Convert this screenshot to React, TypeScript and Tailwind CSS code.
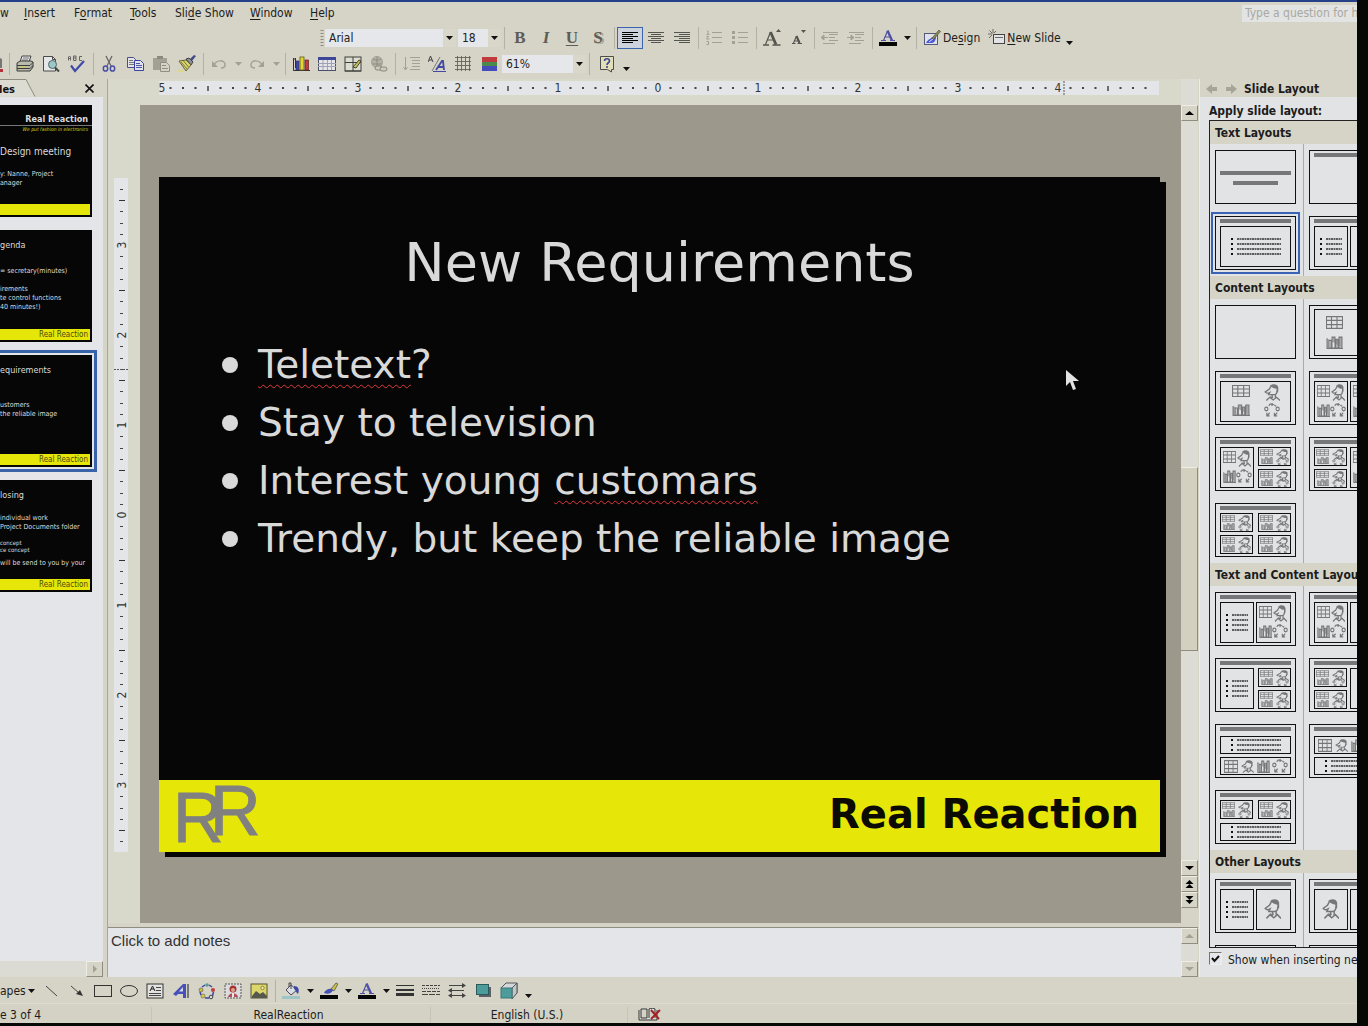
import React from "react";

const UI = "font-['DejaVu_Sans_Condensed','DejaVu_Sans',sans-serif]";

/* ---------- small building blocks ---------- */

function Glyph({ children, w = 18 }: { children: React.ReactNode; w?: number }) {
  return (
    <svg width={w} height="18" viewBox={`0 0 ${w} 18`} fill="none" aria-hidden="true" className="shrink-0">
      {children}
    </svg>
  );
}

function Tool({ label, children, on = false }: { label: string; children: React.ReactNode; on?: boolean }) {
  return (
    <button
      aria-label={label}
      className={
        on
          ? "flex h-[22px] w-[26px] shrink-0 items-center justify-center border border-[#3a64ad] bg-[#cdd2dc]"
          : "flex h-[22px] w-[26px] shrink-0 items-center justify-center"
      }
    >
      {children}
    </button>
  );
}

function Sep() {
  return (
    <div className="flex h-[22px] w-[6px] shrink-0 justify-center">
      <div className="w-px bg-[#b3b1a4]" />
    </div>
  );
}

function Drop({ label, dim = false, low = false }: { label: string; dim?: boolean; low?: boolean }) {
  return (
    <button aria-label={label} className={low ? "flex h-[22px] w-[12px] shrink-0 items-end justify-center pb-1" : "flex h-[22px] w-[12px] shrink-0 items-center justify-center"}>
      <svg width="7" height="4" viewBox="0 0 7 4" aria-hidden="true">
        <path d="M0 0h7L3.5 4z" fill={dim ? "#a3a195" : "#111"} />
      </svg>
    </button>
  );
}

function Combo({ label, value, box }: { label: string; value: string; box: string }) {
  return (
    <div className={box}>
      <select aria-label={label} className="h-[18px] min-w-0 flex-1 appearance-none bg-[#e6e7ea] pl-1 text-[12px] leading-[18px] text-[#222] outline-none">
        <option>{value}</option>
      </select>
      <div className="flex w-[13px] items-center justify-center bg-[#d8d7c9]">
        <svg width="7" height="4" viewBox="0 0 7 4" aria-hidden="true">
          <path d="M0 0h7L3.5 4z" fill="#111" />
        </svg>
      </div>
    </div>
  );
}

/* ---------- menu bar ---------- */

function MenuItem({ pre = "", hot, post, w }: { pre?: string; hot: string; post: string; w: string }) {
  return (
    <button className={`${w} shrink-0 text-left whitespace-nowrap`}>
      {pre}
      <span className="underline underline-offset-2">{hot}</span>
      {post}
    </button>
  );
}

function MenuBar() {
  return (
    <nav className="flex h-[23px] shrink-0 items-center pb-px text-[12px] leading-[16px]">
      <button className="w-6 shrink-0 text-left">w</button>
      <MenuItem hot="I" post="nsert" w="w-[50px]" />
      <MenuItem pre="F" hot="o" post="rmat" w="w-[56px]" />
      <MenuItem hot="T" post="ools" w="w-[45px]" />
      <MenuItem pre="Sli" hot="d" post="e Show" w="w-[75px]" />
      <MenuItem hot="W" post="indow" w="w-[60px]" />
      <MenuItem hot="H" post="elp" w="w-[40px]" />
      <div className="flex-1" />
      <input
        aria-label="Type a question for help"
        placeholder="Type a question for h"
        className="h-[17px] w-[115px] bg-[#e2e3e3] pl-[3px] text-[12px] outline-none placeholder:text-[#a9a99f]"
      />
    </nav>
  );
}

/* ---------- formatting toolbar ---------- */

const GREY = "#55554f";
const DIM = "#a3a195";

function Lines({ rows, color }: { rows: [number, number, number][]; color: string }) {
  return (
    <g stroke={color} strokeWidth="1">
      {rows.map(([x1, x2, y], i) => (
        <path key={i} d={`M${x1} ${y + 0.5}H${x2}`} />
      ))}
    </g>
  );
}

function FormatBar() {
  const serif = "font-['Liberation_Serif',serif] text-[17px] leading-[18px] font-bold text-[#5d5d57]";
  return (
    <div className="flex h-[26px] shrink-0 items-center pl-[319px] text-[12px]">
      <svg width="6" height="16" viewBox="0 0 6 16" aria-hidden="true" className="shrink-0">
        <path d="M3 0v16" stroke="#8f8d80" strokeWidth="3" strokeDasharray="1 2" />
      </svg>
      <Combo label="Font" value="Arial" box="flex w-[131px] shrink-0" />
      <Combo label="Font size" value="18" box="ml-[2px] flex w-[43px] shrink-0" />
      <Sep />
      <Tool label="Bold"><span className={serif}>B</span></Tool>
      <Tool label="Italic"><span className={serif + " italic"}>I</span></Tool>
      <Tool label="Underline"><span className={serif + " underline underline-offset-2"}>U</span></Tool>
      <Tool label="Shadow"><span className={serif + " [text-shadow:2px_1px_#a9a79a]"}>S</span></Tool>
      <Sep />
      <Tool label="Align left" on>
        <Glyph><Lines color="#000" rows={[[1, 17, 3], [1, 12, 5], [1, 17, 7], [1, 12, 9], [1, 17, 11], [1, 12, 13]]} /></Glyph>
      </Tool>
      <Tool label="Center">
        <Glyph><Lines color={GREY} rows={[[1, 17, 3], [4, 14, 5], [1, 17, 7], [4, 14, 9], [1, 17, 11], [4, 14, 13]]} /></Glyph>
      </Tool>
      <Tool label="Align right">
        <Glyph><Lines color={GREY} rows={[[1, 17, 3], [6, 17, 5], [1, 17, 7], [6, 17, 9], [1, 17, 11], [6, 17, 13]]} /></Glyph>
      </Tool>
      <Sep />
      <Tool label="Numbering">
        <Glyph>
          <Lines color={DIM} rows={[[7, 17, 3], [7, 17, 8], [7, 17, 13]]} />
          <path d="M2 2h1v3M1.500 5.500h3M1.500 7.500h2l-2 2.500h3M1.500 12.500h2v3h-2" stroke={DIM} />
        </Glyph>
      </Tool>
      <Tool label="Bullets">
        <Glyph>
          <Lines color={DIM} rows={[[7, 17, 3], [7, 17, 8], [7, 17, 13]]} />
          <path d="M1 2h3v3h-3zM1 7h3v3h-3zM1 12h3v3h-3z" fill={DIM} />
        </Glyph>
      </Tool>
      <Sep />
      <Tool label="Increase font size">
        <Glyph>
          <path d="M7.500 3L2.500 15.500M4.500 11h7" stroke={GREY} strokeWidth="1.200" />
          <path d="M7.500 3l5.500 12.500" stroke={GREY} strokeWidth="2.800" />
          <path d="M0 16h6M9.500 16h8" stroke={GREY} strokeWidth="1.300" />
          <path d="M13 3h5l-2.500-3z" fill={GREY} />
        </Glyph>
      </Tool>
      <Tool label="Decrease font size">
        <Glyph>
          <path d="M7.500 7L4.500 14M5.500 12h5" stroke={GREY} strokeWidth="1.100" />
          <path d="M7.500 7l3 7" stroke={GREY} strokeWidth="2.200" />
          <path d="M3 14.500h3.500M8.500 14.500h4.500" stroke={GREY} />
          <path d="M12 1h5l-2.500 3z" fill={GREY} />
        </Glyph>
      </Tool>
      <Sep />
      <Tool label="Decrease indent">
        <Glyph>
          <Lines color={DIM} rows={[[2, 17, 3], [8, 17, 5], [8, 14, 8], [8, 17, 11], [2, 14, 14]]} />
          <path d="M0 8.500h7M3 6l-3 2.500 3 2.500z" fill={DIM} stroke={DIM} />
        </Glyph>
      </Tool>
      <Tool label="Increase indent">
        <Glyph>
          <Lines color={DIM} rows={[[2, 17, 3], [8, 17, 5], [8, 14, 8], [8, 17, 11], [2, 14, 14]]} />
          <path d="M0 8.500h7M4 6l3 2.500-3 2.500z" fill={DIM} stroke={DIM} />
        </Glyph>
      </Tool>
      <Sep />
      <Tool label="Font color"><FontColor /></Tool>
      <Drop label="Font color menu" />
      <Sep />
      <button className="ml-1 flex h-[22px] shrink-0 items-center gap-[2px]">
        <Glyph>
          <rect x="1.500" y="4.500" width="13" height="11" fill="#dfe1ec" stroke="#555a78" />
          <path d="M3 14c2-4 5-4 6-6l4 0c0 3-2 6-4 6z" fill="#4a58d6" />
          <path d="M6 13l5-4" stroke="#dfe1ec" />
          <path d="M9 9l7-8 1.500 1.500-7 8z" fill="#8a8a55" stroke="#55553c" strokeWidth=".7" />
        </Glyph>
        <span>De<span className="underline underline-offset-2">s</span>ign</span>
      </button>
      <button className="ml-2 flex h-[22px] shrink-0 items-center gap-[1px]">
        <Glyph>
          <rect x="5.500" y="5.500" width="11" height="9" fill="#e2e3e6" stroke="#444" />
          <path d="M7 8.500h8M5 0v4M0 5h4M1.500 1.500l3 3M8 2l-2 2M1 9l3-3" stroke="#6b6b66" />
        </Glyph>
        <span><span className="underline underline-offset-2">N</span>ew Slide</span>
      </button>
      <div className="ml-[3px]"><Drop label="Toolbar options" low /></div>
    </div>
  );
}

function FontColor() {
  return (
    <Glyph>
      <path d="M8.500 2L4.500 11.500M6 8h6" stroke="#5052a4" strokeWidth="1.200" />
      <path d="M8.500 1.500l4.500 10" stroke="#5052a4" strokeWidth="2.400" />
      <path d="M2 11.500h5M11 11.500h5" stroke="#5052a4" />
      <rect x="0" y="13" width="18" height="4" fill="#050505" />
    </Glyph>
  );
}

/* ---------- standard toolbar ---------- */

function StandardBar() {
  return (
    <div className="flex h-[26px] shrink-0 items-center text-[12px]">
      <svg width="6" height="18" viewBox="0 0 6 18" aria-hidden="true" className="shrink-0">
        <path d="M0 3l2 1v9H0z" fill="#777" />
        <path d="M0 14h3v3H0z" fill="#b2323a" />
      </svg>
      <Sep />
      <Tool label="Print">
        <Glyph>
          <path d="M6 1h9l-2 6H4z" fill="#e5e6e8" stroke="#444" />
          <path d="M7 3h6M6 5h6" stroke="#777" />
          <path d="M1 8l3-2h11l2 1v5l-3 4H1z" fill="#b9b9ae" stroke="#3a3a38" />
          <path d="M1 10.500h13l3-3M1 13.500h13l3-3" stroke="#3a3a38" />
          <path d="M4 12h5" stroke="#d8d04a" />
        </Glyph>
      </Tool>
      <Tool label="Print preview">
        <Glyph>
          <path d="M1.500 1.500h9l3 3v11.500h-12z" fill="#e6e7e9" stroke="#4a4a48" />
          <path d="M10.500 1.500v3h3" stroke="#4a4a48" />
          <circle cx="10.500" cy="9.500" r="4" fill="#9fc6c7" stroke="#4c6669" />
          <path d="M13 12.500l4 4" stroke="#444" strokeWidth="2" />
        </Glyph>
      </Tool>
      <Tool label="Spelling">
        <Glyph>
          <path d="M.5 5.500V2l1-1 1 1v3.500M.5 3.500h2M5.500 1v4.500h2.500V1zM5.500 3h2.500M14 1.500h-2.500v4H14" stroke="#666" />
          <path d="M3 10.500l4 5.500L16 6" stroke="#4149a8" strokeWidth="2.200" />
        </Glyph>
      </Tool>
      <Sep />
      <Tool label="Cut">
        <Glyph>
          <path d="M6 1l5 10M12 1l-5 10" stroke="#666" strokeWidth="1.300" />
          <ellipse cx="5.500" cy="13.500" rx="2.200" ry="2.600" stroke="#474fa6" strokeWidth="1.500" />
          <ellipse cx="12.500" cy="13.500" rx="2.200" ry="2.600" stroke="#474fa6" strokeWidth="1.500" />
        </Glyph>
      </Tool>
      <Tool label="Copy">
        <Glyph>
          <path d="M1.500 2.500h6l2 2v8h-8z" fill="#e3e4ea" stroke="#4b4e86" />
          <path d="M3 5.500h4M3 7.500h5M3 9.500h5" stroke="#777" />
          <path d="M8.500 5.500h6l3 3v7h-9z" fill="#e3e4ea" stroke="#3a42a2" />
          <path d="M10 8.500h4M10 10.500h6M10 12.500h6" stroke="#4c55a8" />
        </Glyph>
      </Tool>
      <Tool label="Paste">
        <Glyph>
          <path d="M1 3h14v12H1z" fill="#a3a196" />
          <path d="M5 1h6v3H5z" fill="#8c8a7f" />
          <path d="M8.500 7.500h6l3 3v6h-9z" fill="#d3d2c5" stroke="#908e83" />
          <path d="M10 10.500h4M10 13.500h6" stroke="#908e83" />
        </Glyph>
      </Tool>
      <Tool label="Format painter">
        <Glyph>
          <path d="M12 4l4-4 2 1-4 5z" fill="#434a8c" />
          <path d="M8 4l3-1 4 4-2 3z" fill="#8c8f9a" stroke="#444" />
          <path d="M1 6l7-1 5 5-5 6z" fill="#d9d568" stroke="#64623c" />
          <path d="M3 7l6 7M5.500 6l5 6" stroke="#77754a" />
          <path d="M0 16h6" stroke="#e4dc4a" />
        </Glyph>
      </Tool>
      <Sep />
      <Tool label="Undo">
        <Glyph>
          <path d="M4 10c2-5 11-6 11 0 0 2-2 3-4 3" stroke={DIM} strokeWidth="1.500" />
          <path d="M2 6v6h6z" fill={DIM} />
        </Glyph>
      </Tool>
      <Drop label="Undo menu" dim />
      <Tool label="Redo">
        <Glyph>
          <path d="M14 10c-2-5-11-6-11 0 0 2 2 3 4 3" stroke={DIM} strokeWidth="1.500" />
          <path d="M16 6v6h-6z" fill={DIM} />
        </Glyph>
      </Tool>
      <Drop label="Redo menu" dim />
      <Sep />
      <Tool label="Insert chart">
        <Glyph>
          <path d="M1.500 3v12.500H18M1.500 15.500V5l2-2v10" stroke="#333" />
          <rect x="4" y="6" width="3" height="9" fill="#444cb0" stroke="#2b2f66" strokeWidth=".7" />
          <rect x="8" y="2" width="4" height="13" fill="#e3d631" stroke="#5d581c" strokeWidth=".8" />
          <rect x="13" y="5" width="3.500" height="10" fill="#c23a3c" stroke="#5e2022" strokeWidth=".7" />
        </Glyph>
      </Tool>
      <Tool label="Insert table">
        <Glyph>
          <rect x=".5" y="2.500" width="17" height="13" fill="#e5e6ea" stroke="#4b4e66" />
          <rect x="0" y="2" width="18" height="3" fill="#3e4699" />
          <path d="M0 8.500h18M0 11.500h18M5 5v10M9.500 5v10M13.500 5v10" stroke="#a0a2b4" />
        </Glyph>
      </Tool>
      <Tool label="Tables and borders">
        <Glyph>
          <rect x="1" y="2" width="16" height="14" fill="#dddcd2" stroke="#3f3f3b" />
          <path d="M1 7.500h16M9 2v14M1 16h16" stroke="#3f3f3b" />
          <path d="M9 12l6-7 2 1-5 7z" fill="#c9c15a" stroke="#45432a" />
        </Glyph>
      </Tool>
      <Tool label="Insert hyperlink">
        <Glyph>
          <circle cx="7" cy="7" r="5.500" fill="#b5b3a8" stroke={DIM} />
          <path d="M3 4c3 2 6 1 8 0M2 9h10M7 2v10" stroke="#8f8d82" />
          <rect x="5" y="11" width="7" height="4" rx="2" stroke="#8b897e" fill="#cbcabd" />
          <rect x="10" y="12" width="7" height="4" rx="2" stroke="#8b897e" fill="#cbcabd" />
        </Glyph>
      </Tool>
      <Sep />
      <Tool label="Expand all">
        <Glyph>
          <path d="M3.500 2v12M1.500 12l2 3 2-3" stroke={DIM} />
          <Lines color={DIM} rows={[[8, 18, 2], [10, 18, 5], [10, 18, 8], [10, 18, 11], [8, 18, 14]]} />
        </Glyph>
      </Tool>
      <Tool label="Show formatting">
        <Glyph>
          <path d="M0 7l2.500-6 2.500 6M1 5h3" stroke="#444" />
          <path d="M4 16L12 2" stroke="#777" />
          <path d="M8 15l6-9h1l1 9M10 12h5" stroke="#4249a2" strokeWidth="1.800" />
          <path d="M5 16.500h13" stroke="#4249a2" />
        </Glyph>
      </Tool>
      <Tool label="Show grid">
        <Glyph>
          <path d="M1 2.500h16M1 6.500h16M1 10.500h16M1 14.500h16M3.500 1v15M7.500 1v15M11.500 1v15M15.500 1v15" stroke="#63635e" strokeWidth=".9" />
        </Glyph>
      </Tool>
      <Tool label="Color or grayscale">
        <Glyph>
          <rect x="2" y="2" width="15" height="5" fill="#bf3b3e" />
          <rect x="2" y="7" width="15" height="4" fill="#4b8a4e" />
          <rect x="2" y="11" width="15" height="5" fill="#464cba" />
        </Glyph>
      </Tool>
      <Combo label="Zoom" value="61%" box="flex w-[84px] shrink-0" />
      <Sep />
      <div className="ml-[2px]">
        <Tool label="Help">
          <Glyph>
            <path d="M2.500 1.500h13v13h-2v2.500l-4-2.500h-7z" fill="#e2e0b8" stroke="#4d4d49" />
            <path d="M6.500 6c0-3 5-3 5 0 0 2-2.500 1.500-2.500 4M9 11v2" stroke="#3d4493" strokeWidth="1.600" />
          </Glyph>
        </Tool>
      </div>
      <Drop label="More buttons" low />
    </div>
  );
}

/* ---------- left thumbnails ---------- */

function Mini({ children, footer = true }: { children: React.ReactNode; footer?: boolean }) {
  return (
    <div className="flex h-[112px] w-[92px] flex-col overflow-hidden bg-[#060606] text-[7px] leading-[9px] whitespace-nowrap text-[#dcdcdc]">
      <div className="min-h-0 flex-1">{children}</div>
      <div className="mr-[2px] mb-[2px] h-[11px] bg-[#e6e708] pr-[2px] text-right text-[8px] leading-[11px] text-[#4a4a08]">
        {footer ? "Real Reaction" : ""}
      </div>
    </div>
  );
}

function LeftPane() {
  return (
    <aside className="flex w-[103px] shrink-0 flex-col overflow-hidden bg-[#e4e5e8]">
      <div className="flex h-[18px] shrink-0 items-center justify-between bg-[#d6d4c7] pr-2">
        <svg width="36" height="18" viewBox="0 0 36 18" className="shrink-0">
          <path d="M0 .5h26l9 17H0z" fill="#dddcd2" />
          <path d="M0 .5h26l9 17" fill="none" stroke="#8f8d80" />
          <text x="-1" y="14" fontSize="11" fontWeight="bold" fontFamily="'DejaVu Sans Condensed','DejaVu Sans',sans-serif" fill="#111">les</text>
        </svg>
        <button aria-label="Close" className="flex h-4 w-3 items-center justify-center">
          <svg width="9" height="9" viewBox="0 0 9 9" aria-hidden="true"><path d="M.5.5l8 8M8.500.5l-8 8" stroke="#111" strokeWidth="1.600" /></svg>
        </button>
      </div>
      <div className="flex flex-1 flex-col pt-[8px]">
        <Mini footer={false}>
          <div className="mt-[9px] border-b border-[#77777a] pr-1 text-right text-[9px] leading-[11px] font-bold">Real Reaction</div>
          <div className="pr-1 text-right text-[5px] leading-[6px] italic text-[#d8d81c]">We put fashion in electronics</div>
          <div className="mt-[14px] text-[10px] leading-[12px]">Design meeting</div>
          <div className="mt-[12px]">y: Nanne, Project</div>
          <div>anager</div>
        </Mini>
        <div className="h-[13px]" />
        <Mini>
          <div className="pt-[9px] text-[9px] leading-[12px]">genda</div>
          <div className="mt-[16px]">= secretary(minutes)</div>
          <div className="mt-[9px]">irements</div>
          <div>te control functions</div>
          <div>40 minutes!)</div>
        </Mini>
        <div className="mt-[8px] mb-[8px] w-[97px] border-y-[3px] border-r-[3px] border-[#3963a8] py-[2px]">
          <Mini>
            <div className="pt-[9px] text-[9px] leading-[12px]">equirements</div>
            <div className="mt-[25px]">ustomers</div>
            <div>the reliable image</div>
          </Mini>
        </div>
        <Mini>
          <div className="pt-[9px] text-[9px] leading-[12px]">losing</div>
          <div className="mt-[13px]">individual work</div>
          <div>Project Documents folder</div>
          <div className="mt-[7px] text-[6px] leading-[7px]">concept</div>
          <div className="text-[6px] leading-[7px]">ce concept</div>
          <div className="mt-[6px]">will be send to you by your</div>
        </Mini>
      </div>
      <div className="flex h-[16px] shrink-0 justify-end bg-[#dcdbd3]">
        <ScrollBtn d="M3 0v8l4-4z" label="Scroll right" dim />
      </div>
    </aside>
  );
}

function ScrollBtn({ d, label, dim = false }: { d: string; label: string; dim?: boolean }) {
  return (
    <button aria-label={label} className="flex h-[16px] w-[17px] shrink-0 items-center justify-center border-t border-r border-b border-l border-t-[#efeee6] border-r-[#8f8d80] border-b-[#8f8d80] border-l-[#efeee6] bg-[#d6d4c7]">
      <svg width="9" height="8" viewBox="0 0 9 8" aria-hidden="true"><path d={d} fill={dim ? DIM : "#000"} /></svg>
    </button>
  );
}

const UP = "M0 6h9L4.500 2z";
const DOWN = "M0 2h9L4.500 6z";

/* ---------- rulers ---------- */

const MARKS = Array.from({ length: 81 }, (_, i) => i - 40);

function RulerTop() {
  return (
    <svg width="1000" height="14" viewBox="0 0 1000 14" className="shrink-0 bg-[#e4e5e8]">
      {MARKS.map((m) => {
        const x = 499 + m * 12.5;
        if (m % 8 === 0)
          return m === 40 ? null : (
            <text key={m} x={Math.max(x, 3)} y="11" textAnchor="middle" fontSize="12" fontFamily="'DejaVu Sans Condensed','DejaVu Sans',sans-serif" fill="#333">{Math.abs(m / 8)}</text>
          );
        return m % 4 === 0 ? (
          <path key={m} d={`M${x} 5v5`} stroke="#444" strokeWidth="1.500" />
        ) : (
          <rect key={m} x={x - 1} y="6" width="2" height="2" fill="#444" />
        );
      })}
      <path d="M905 0v14" stroke="#555" strokeDasharray="2 1" />
    </svg>
  );
}

function RulerSide() {
  return (
    <svg width="14" height="674" viewBox="0 0 14 674" className="shrink-0 bg-[#e4e5e8]">
      {MARKS.filter((m) => Math.abs(m) < 30).map((m) => {
        const y = 337 + m * 11.25;
        if (m % 8 === 0)
          return (
            <text key={m} transform={`translate(12 ${y}) rotate(-90)`} textAnchor="middle" fontSize="12" fontFamily="'DejaVu Sans Condensed','DejaVu Sans',sans-serif" fill="#333">{Math.abs(m / 8)}</text>
          );
        return m % 4 === 0 ? (
          <path key={m} d={`M5 ${Math.round(y) + 0.5}h6`} stroke="#333" />
        ) : (
          <path key={m} d={`M6 ${Math.round(y) + 0.5}h3`} stroke="#444" />
        );
      })}
      <path d="M0 191.500h14" stroke="#555" strokeDasharray="2 1" />
    </svg>
  );
}

/* ---------- slide ---------- */

function Bullet({ children }: { children: React.ReactNode }) {
  return (
    <li className="flex items-center leading-[58px] whitespace-nowrap">
      <span className="mr-[20px] size-[16px] rounded-full bg-[#d9d9d9]" />
      <span>{children}</span>
    </li>
  );
}

const SPELL = "underline decoration-[#e0383c] decoration-wavy decoration-1 underline-offset-[6px]";

function Slide() {
  return (
    <div className="relative flex flex-1 flex-col bg-[#060606] font-['DejaVu_Sans',sans-serif] text-[#d9d9d9] shadow-[6px_5px_0_#060606]">
      <h1 className="mt-[54px] text-center text-[54px] leading-[64px]">New Requirements</h1>
      <ul className="mt-[41px] flex-1 pl-[63px] text-[39px]">
        <Bullet><span className={SPELL}>Teletext</span>?</Bullet>
        <Bullet>Stay to television</Bullet>
        <Bullet>Interest young <span className={SPELL}>customars</span></Bullet>
        <Bullet>Trendy, but keep the reliable image</Bullet>
      </ul>
      <div className="flex h-[72px] items-center justify-between bg-[#e6e708] pr-[21px] pb-1 pl-[14px]">
        <svg width="94" height="68" viewBox="0 0 94 68" fill="#808080" stroke="#808080" strokeWidth="1" fontFamily="'Liberation Sans',Arial,sans-serif" fontSize="70">
          <text x="0" y="62">R</text>
          <text x="37" y="55">R</text>
        </svg>
        <span className="text-[40px] leading-[48px] font-bold text-[#0b0b04]">Real Reaction</span>
      </div>
      <svg width="14" height="22" viewBox="0 0 14 22" className="absolute top-[193px] left-[907px]" aria-hidden="true">
        <path d="M0 0v16l4-4 3 8 3-1-3-8h6z" fill="#e2e2e2" />
      </svg>
    </div>
  );
}

function Workspace() {
  return (
    <main className="flex min-w-0 flex-1 flex-col border-l border-[#a9a79a]">
      <div className="flex min-h-0 flex-1">
        <div className="flex min-w-0 flex-1 flex-col">
          <div className="flex h-[26px] shrink-0 items-center overflow-hidden bg-[#d9d9cb] pb-[8px] pl-[51px]">
            <RulerTop />
          </div>
          <div className="flex min-h-0 flex-1">
            <div className="flex w-[32px] shrink-0 justify-center bg-[#d9d9cb] pt-[73px] pr-[6px]">
              <RulerSide />
            </div>
            <div className="flex min-w-0 flex-1 bg-[#9c988b] pt-[72px] pr-[21px] pb-[71px] pl-[19px]">
              <Slide />
            </div>
          </div>
        </div>
        <div className="flex w-[17px] shrink-0 flex-col bg-[#dddcd4] pt-[26px]">
          <ScrollBtn d={UP} label="Scroll up" />
          <div className="flex min-h-0 flex-1 flex-col">
            <div className="grow-[348]" />
            <div className="grow-[183] border-t border-r border-b border-t-[#efeee6] border-r-[#8f8d80] border-b-[#8f8d80] bg-[#d3d0bf]" />
            <div className="grow-[210]" />
          </div>
          <ScrollBtn d={DOWN} label="Scroll down" />
          <ScrollBtn d="M0.500 4h8l-4-4zM.5 8h8l-4-4z" label="Previous slide" />
          <ScrollBtn d="M0.500 0h8l-4 4zM.5 4h8l-4 4z" label="Next slide" />
          <div className="h-[15px] bg-[#d6d4c7]" />
        </div>
      </div>
      <div className="h-[5px] shrink-0 border-b border-[#8f8d80] bg-[#d6d4c7]" />
      <div className="flex h-[49px] shrink-0">
        <textarea
          aria-label="Notes"
          defaultValue="Click to add notes"
          className="min-w-0 flex-1 resize-none bg-[#e4e5e8] px-[3px] py-1 font-['Liberation_Sans',Arial,sans-serif] text-[15px] leading-[18px] text-[#333] outline-none"
        />
        <div className="flex w-[17px] flex-col justify-between bg-[#dddcd4]">
          <ScrollBtn d={UP} label="Scroll notes up" dim />
          <ScrollBtn d={DOWN} label="Scroll notes down" dim />
        </div>
      </div>
    </main>
  );
}

/* ---------- layout thumbnails ---------- */

type Box = { x: number; y: number; w: number; h: number };
const INK = "#77777a";

function Frame({ x, y, w, h }: Box) {
  return <rect x={x + 0.5} y={y + 0.5} width={w - 1} height={h - 1} fill="none" stroke="#111" />;
}
function TableIcon({ x, y, w, h }: Box) {
  return (
    <svg x={x} y={y} width={w} height={h} viewBox="0 0 17 12" preserveAspectRatio="none">
      <path d="M.5.5h16v11H.5zM.5 4h16M.5 8h16M5.500 1v10M11 1v10" fill="none" stroke={INK} strokeWidth="1.100" />
    </svg>
  );
}
function ChartIcon({ x, y, w, h }: Box) {
  return (
    <svg x={x} y={y} width={w} height={h} viewBox="0 0 17 12" preserveAspectRatio="none">
      <path d="M1 2v9.500h16M3 4h2v7H3zM6 1h3v10H6zM10 3h2v8h-2zM13 1h3v10h-3z" fill="#a6a6a8" stroke={INK} />
    </svg>
  );
}
function PersonIcon({ x, y, w, h }: Box) {
  return (
    <svg x={x} y={y} width={w} height={h} viewBox="0 0 14 16" preserveAspectRatio="none">
      <path d="M6 2.500L4.500 5 1 7.500c1 1.500 3 1 4 .5L4 10h4.500c2 0 3-2 3-4M7 10.500l.5 2.500M10 9.500v3.500M7.500 13l-2.500-1M2 15.500l3-3 3 2.500 3-2.500 3 3" fill="none" stroke={INK} strokeWidth="1.200" />
      <path d="M5 2c1.500-2.500 7-2.500 7.500 1v4l-1.500 1V4.500C9 4.500 7 3 5 2z" fill={INK} />
    </svg>
  );
}
function CycleIcon({ x, y, w, h }: Box) {
  return (
    <svg x={x} y={y} width={w} height={h} viewBox="0 0 17 13" preserveAspectRatio="none">
      <g fill="none" stroke={INK} strokeWidth="1.200">
        <circle cx="2.500" cy="5.500" r="1.700" /><circle cx="14.500" cy="5.500" r="1.700" />
        <path d="M5 2.500l1.500-1.500h3M11 2l2 1M3 9v3h3M3 12l3-3M14 9l-3 3M11 9v3h3" />
      </g>
      <path d="M8 0l3 1.500-3 1.500z" fill={INK} />
    </svg>
  );
}
function Quad(b: Box) {
  const { x, y, w, h } = b;
  const big = h > 25;
  const wide = w > 50;
  if (wide)
    return (
      <>
        <Frame {...b} />
        <TableIcon x={x + 12} y={y + 4} w={18} h={12} /><PersonIcon x={x + 44} y={y + 3} w={16} h={17} />
        <ChartIcon x={x + 12} y={y + 23} w={18} h={12} /><CycleIcon x={x + 44} y={y + 22} w={16} h={14} />
      </>
    );
  if (big)
    return (
      <>
        <Frame {...b} />
        <TableIcon x={x + 3} y={y + 4} w={13} h={12} /><PersonIcon x={x + 17} y={y + 3} w={14} h={17} />
        <ChartIcon x={x + 3} y={y + 23} w={13} h={13} /><CycleIcon x={x + 16} y={y + 22} w={16} h={14} />
      </>
    );
  return (
    <>
      <Frame {...b} />
      <TableIcon x={x + 2} y={y + 2} w={13} h={7} /><PersonIcon x={x + 18} y={y + 2} w={13} h={11} />
      <ChartIcon x={x + 3} y={y + 10} w={12} h={7} /><CycleIcon x={x + 18} y={y + 11} w={13} h={7} />
    </>
  );
}
function Words({ x, y, w, h, n = 4, len }: Box & { n?: number; len: number }) {
  const x0 = x + Math.round((w - len - 6) / 2);
  const y0 = y + Math.round((h - (n - 1) * 5) / 2);
  return (
    <>
      <Frame x={x} y={y} w={w} h={h} />
      {Array.from({ length: n }, (_, i) => (
        <g key={i}>
          <rect x={x0} y={y0 + i * 5 - 1} width="2" height="2" fill="#111" />
          <path d={`M${x0 + 6} ${y0 + i * 5}h${len}`} stroke="#333" strokeWidth="1.500" strokeDasharray="2 .5" />
        </g>
      ))}
    </>
  );
}
function Strip(b: Box) {
  return (
    <>
      <Frame {...b} />
      <TableIcon x={b.x + 4} y={b.y + 3} w={14} h={13} /><PersonIcon x={b.x + 21} y={b.y + 3} w={13} h={13} />
      <ChartIcon x={b.x + 37} y={b.y + 3} w={13} h={13} /><CycleIcon x={b.x + 52} y={b.y + 2} w={16} h={14} />
    </>
  );
}

const L = { x: 5, y: 10, w: 34, h: 41 };
const R = { x: 41, y: 10, w: 35, h: 41 };
const FULL = { x: 5, y: 10, w: 71, h: 41 };
const LT = { x: 5, y: 10, w: 33, h: 19 };
const LB = { x: 5, y: 32, w: 33, h: 19 };
const RT = { x: 43, y: 10, w: 33, h: 19 };
const RB = { x: 43, y: 32, w: 33, h: 19 };
const TOP = { x: 5, y: 12, w: 71, h: 18 };
const BOT = { x: 5, y: 33, w: 71, h: 18 };
const Title = () => <rect x="5" y="3" width="71" height="4" fill={INK} />;
const Solo = ({ b }: { b: Box }) => (<><Frame {...b} /><PersonIcon x={b.x + 8} y={b.y + 10} w={17} h={20} /></>);

type Cell = { name: string; art: React.ReactNode; on?: boolean } | null;
const GROUPS: { title: string; cells: Cell[] }[] = [
  {
    title: "Text Layouts",
    cells: [
      { name: "Title Slide", art: <><rect x="5" y="21" width="71" height="4" fill={INK} /><rect x="18" y="31" width="45" height="4" fill={INK} /></> },
      { name: "Title Only", art: <Title /> },
      { name: "Title and Text", on: true, art: <><Title /><Words {...FULL} len={44} /></> },
      { name: "Title and 2-Column Text", art: <><Title /><Words {...L} len={16} /><Words {...R} len={16} /></> },
    ],
  },
  {
    title: "Content Layouts",
    cells: [
      { name: "Blank", art: null },
      { name: "Content", art: <><Frame x={5} y={4} w={71} h={47} /><TableIcon x={17} y={11} w={17} h={13} /><ChartIcon x={17} y={31} w={17} h={13} /></> },
      { name: "Title and Content", art: <><Title /><Quad {...FULL} /></> },
      { name: "Title and 2 Content", art: <><Title /><Quad {...L} /><Quad {...R} /></> },
      { name: "Title, Content and 2 Content", art: <><Title /><Quad {...L} /><Quad {...RT} /><Quad {...RB} /></> },
      { name: "Title, 2 Content and Content", art: <><Title /><Quad {...LT} /><Quad {...LB} /><Quad {...R} /></> },
      { name: "Title and 4 Content", art: <><Title /><Quad {...LT} /><Quad {...LB} /><Quad {...RT} /><Quad {...RB} /></> },
      null,
    ],
  },
  {
    title: "Text and Content Layou",
    cells: [
      { name: "Title, Text and Content", art: <><Title /><Words {...L} len={16} /><Quad {...R} /></> },
      { name: "Title, Content and Text", art: <><Title /><Quad {...L} /><Words {...R} len={16} /></> },
      { name: "Title, Text and 2 Content", art: <><Title /><Words {...L} len={16} /><Quad {...RT} /><Quad {...RB} /></> },
      { name: "Title, 2 Content and Text", art: <><Title /><Quad {...LT} /><Quad {...LB} /><Words {...R} len={16} /></> },
      { name: "Title and Text over Content", art: <><Title /><Words {...TOP} n={3} len={44} /><Strip {...BOT} /></> },
      { name: "Title and Content over Text", art: <><Title /><Strip {...TOP} /><Words {...BOT} n={3} len={44} /></> },
      { name: "Title and 2 Content over Text", art: <><Title /><Quad {...LT} /><Quad {...RT} /><Words {...BOT} n={3} len={44} /></> },
      null,
    ],
  },
  {
    title: "Other Layouts",
    cells: [
      { name: "Title, Text and Clip Art", art: <><Title /><Words {...L} len={16} /><Solo b={R} /></> },
      { name: "Title, Clip Art and Text", art: <><Title /><Solo b={L} /><Words {...R} len={16} /></> },
      { name: "Title, Text and Chart", art: <Title /> },
      { name: "Title, Chart and Text", art: <Title /> },
    ],
  },
];

function LayoutCell({ cell }: { cell: Cell }) {
  return (
    <div className="flex h-[66px] items-center justify-start border-r border-[#aaaaad] pl-[1px]">
      {cell && (
        <button aria-label={cell.name} className={cell.on ? "border-2 border-[#3963b4] p-[2px]" : "border-2 border-transparent p-[2px]"}>
          <svg width="81" height="54" viewBox="0 0 81 54" className="block" aria-hidden="true">
            <Frame x={0} y={0} w={81} h={54} />
            {cell.art}
          </svg>
        </button>
      )}
    </div>
  );
}

function Arrow({ d }: { d: string }) {
  return <svg width="12" height="12" viewBox="0 0 12 12" aria-hidden="true"><path d={d} fill="#a7a598" /></svg>;
}

function TaskPane() {
  return (
    <aside className="flex w-[157px] shrink-0 flex-col overflow-hidden bg-[#e2e3e4] text-[12px] leading-[16px] whitespace-nowrap">
      <div className="flex h-[18px] shrink-0 items-center bg-[#d6d4c7] pt-px pl-[6px]">
        <button aria-label="Back" className="w-[20px]"><Arrow d="M0 6l6-5v3h5v4H6v3z" /></button>
        <button aria-label="Forward" className="w-[18px]"><Arrow d="M11 6L5 1v3H0v4h5v3z" /></button>
        <h2 className="font-bold">Slide Layout</h2>
      </div>
      <div className="pt-[6px] pb-px pl-[9px] font-bold">Apply slide layout:</div>
      <div className="ml-[9px] min-h-0 flex-1 overflow-hidden border-y border-l border-[#222]">
        {GROUPS.map((g) => (
          <section key={g.title}>
            <h3 className="h-[23px] bg-[#d6d4c7] pt-px pl-[5px] leading-[22px] font-bold">{g.title}</h3>
            <div className="grid w-[188px] grid-cols-2">
              {g.cells.map((c, i) => <LayoutCell key={i} cell={c} />)}
            </div>
          </section>
        ))}
      </div>
      <label className="flex h-[29px] shrink-0 items-start gap-[6px] pt-1 pl-[9px]">
        <span className="grid shrink-0">
          <input type="checkbox" defaultChecked className="peer col-start-1 row-start-1 size-[13px] appearance-none border border-t-[#77756a] border-r-[#eee] border-b-[#eee] border-l-[#77756a] bg-[#e6e7ea]" />
          <svg width="13" height="13" viewBox="0 0 13 13" aria-hidden="true" className="pointer-events-none col-start-1 row-start-1 hidden peer-checked:block">
            <path d="M3 6l2.500 3L10 4" fill="none" stroke="#111" strokeWidth="2" />
          </svg>
        </span>
        <span>Show when inserting new</span>
      </label>
    </aside>
  );
}

/* ---------- drawing toolbar ---------- */

function DrawBar() {
  return (
    <div className="flex h-[26px] shrink-0 items-center bg-[#d6d4c7] pt-[2px] text-[12px]">
      <button className="flex w-[38px] shrink-0 items-center gap-[2px]">
        <span>apes</span>
        <svg width="7" height="4" viewBox="0 0 7 4" aria-hidden="true"><path d="M0 0h7L3.500 4z" fill="#111" /></svg>
      </button>
      <Tool label="Line"><Glyph><path d="M4 4l11 10" stroke="#444" /></Glyph></Tool>
      <Tool label="Arrow"><Glyph><path d="M3 4l8 7" stroke="#444" /><path d="M15 14l-7-2 4-4z" fill="#333" /></Glyph></Tool>
      <Tool label="Rectangle"><Glyph><rect x=".5" y="3.500" width="17" height="11" stroke="#333" /></Glyph></Tool>
      <Tool label="Oval"><Glyph><ellipse cx="9" cy="9" rx="8.500" ry="5.500" stroke="#333" /></Glyph></Tool>
      <Tool label="Text box">
        <Glyph>
          <rect x="1" y="2" width="16" height="14" fill="#e3e3e1" stroke="#333" />
          <path d="M4 9l2.500-5L9 9M5 7h3" stroke="#222" />
          <path d="M10 5.500h5M10 8.500h5M3 11.500h12M3 13.500h12" stroke="#444" />
        </Glyph>
      </Tool>
      <Tool label="WordArt">
        <Glyph>
          <path d="M1 12L11 2h3v14h-3v-4H6l-2 2z" fill="#4650bb" />
          <path d="M7 9.500h4V5z" fill="#d7d8e0" />
          <path d="M16 2v14" stroke="#777" strokeWidth="2" />
        </Glyph>
      </Tool>
      <Tool label="Diagram">
        <Glyph>
          <path d="M4 5l3-2M11 3l3 2M15.500 10l-1 4M11 16H7M3 13l-1-3" stroke="#3b45a5" strokeWidth="1.500" />
          <circle cx="9" cy="3" r="1.800" fill="#5a9a92" />
          <circle cx="15" cy="8" r="2" fill="#bd3e41" />
          <circle cx="3" cy="8" r="2" fill="#c9c13a" stroke="#555" strokeWidth=".6" />
          <circle cx="5" cy="14" r="2" fill="#d9cf37" stroke="#555" strokeWidth=".6" />
          <circle cx="13" cy="15" r="1.800" fill="#d8d8d8" stroke="#444" />
        </Glyph>
      </Tool>
      <Tool label="Clip art">
        <Glyph>
          <rect x="1" y="2" width="16" height="14" fill="#dcdcdf" stroke="#555" strokeDasharray="2 1" />
          <circle cx="9" cy="7" r="3.500" fill="#a5342f" />
          <circle cx="9" cy="8" r="2" fill="#dba48d" />
          <path d="M4 15c1-5 9-5 10 0z" fill="#b44b55" />
          <path d="M9 11v4" stroke="#e8e8e8" strokeWidth="2" />
        </Glyph>
      </Tool>
      <Tool label="Picture">
        <Glyph>
          <rect x="1" y="2" width="16" height="14" fill="#ddd66a" stroke="#55552f" />
          <circle cx="12.500" cy="6" r="1.700" fill="#f1ecab" stroke="#66642f" strokeWidth=".7" />
          <path d="M2 14l4-5 4 3 3-2 4 4v2H2z" fill="#55584a" />
        </Glyph>
      </Tool>
      <Sep />
      <Tool label="Fill color">
        <Glyph>
          <path d="M4 8l5-5 6 5-6 5z" fill="#dcdde2" stroke="#454a6a" />
          <path d="M9 7V1h-2v4" stroke="#444" />
          <path d="M12 4c4 0 6 3 4 8-2-1-2-4-4-5z" fill="#3f48a5" />
          <rect y="14" width="18" height="3" fill="#9cc5c8" />
        </Glyph>
      </Tool>
      <Drop label="Fill color menu" />
      <Tool label="Line color">
        <Glyph>
          <path d="M11 7l5-6 2 1-4 7z" fill="#c9bf49" stroke="#444" strokeWidth=".7" />
          <path d="M4 11c1-3 5-5 8-4l1 1c-1 3-5 5-9 3z" fill="#4851b4" />
          <rect y="13" width="18" height="4" fill="#050505" />
        </Glyph>
      </Tool>
      <Drop label="Line color menu" />
      <Tool label="Text color"><FontColor /></Tool>
      <Drop label="Text color menu" />
      <Tool label="Line style">
        <Glyph><path d="M0 3.500h18" stroke="#333" /><path d="M0 8h18" stroke="#333" strokeWidth="2" /><path d="M0 12.500h18" stroke="#333" strokeWidth="3" /></Glyph>
      </Tool>
      <Tool label="Dash style">
        <Glyph>
          <path d="M0 3.500h18" stroke="#444" strokeDasharray="3 1" /><path d="M0 6.500h18" stroke="#444" strokeDasharray="1 1" />
          <path d="M0 9.500h18" stroke="#444" strokeDasharray="4 1" /><path d="M0 12.500h18" stroke="#444" strokeDasharray="6 1" />
        </Glyph>
      </Tool>
      <Tool label="Arrow style">
        <Glyph>
          <path d="M1 3.500h15M2 8.500h14M2 13.500h14" stroke="#444" />
          <path d="M14 1l4 2.500L14 6zM4 6L0 8.500 4 11zM4 11l-4 2.500L4 16zM14 11l4 2.500-4 2.500z" fill="#444" />
        </Glyph>
      </Tool>
      <Tool label="Shadow style">
        <Glyph><path d="M5 5h12v10H5z" fill="#5c5f66" /><rect x="2.500" y="2.500" width="12" height="10" fill="#4d9c9c" stroke="#2c5a5a" /></Glyph>
      </Tool>
      <Tool label="3-D style">
        <Glyph>
          <path d="M1 6l5-5h11v10l-5 5z" fill="#d5d6d8" stroke="#55585a" />
          <path d="M12 6l5-5v10l-5 6z" fill="#c3c5c9" stroke="#55585a" />
          <rect x="1" y="6" width="11" height="10" fill="#4d9c9c" stroke="#3a7676" />
        </Glyph>
      </Tool>
      <Drop label="Drawing options" low />
    </div>
  );
}

function StatusBar() {
  return (
    <footer className="flex h-[20px] shrink-0 items-center border-t border-[#dedccf] bg-[#d4d2c4] pt-[2px] text-[12px] leading-[16px] whitespace-nowrap">
      <div className="w-[152px] shrink-0 border-r border-[#c6c4b6]">e 3 of 4</div>
      <div className="w-[279px] shrink-0 border-r border-[#c6c4b6] pr-[5px] text-center">RealReaction</div>
      <div className="w-[197px] shrink-0 border-r border-[#c6c4b6] pr-1 text-center">English (U.S.)</div>
      <svg width="24" height="14" viewBox="0 0 24 14" aria-label="Spelling status" className="ml-[10px]">
        <path d="M1 2v10h18V2M3 1h6v9H3zM11 10V1c2-1 5-1 6 0v9" fill="#e0e0dd" stroke="#333" />
        <path d="M13 2l8 9M22 2l-9 9" stroke="#a32228" strokeWidth="2" />
      </svg>
    </footer>
  );
}

export default function App() {
  return (
    <div className="h-screen overflow-hidden bg-[#060806] pr-[11px] pb-[3px]">
      <div className={`${UI} flex h-full flex-col overflow-hidden border-t-2 border-[#24418a] bg-[#d6d4c7] text-[#1c1c1c]`}>
        <MenuBar />
        <FormatBar />
        <StandardBar />
        <div className="mt-[2px] flex min-h-0 flex-1">
          <LeftPane />
          <div className="w-1 shrink-0" />
          <Workspace />
          <div className="w-[2px] shrink-0 border-r border-[#efeee6]" />
          <TaskPane />
        </div>
        <DrawBar />
        <StatusBar />
      </div>
    </div>
  );
}
